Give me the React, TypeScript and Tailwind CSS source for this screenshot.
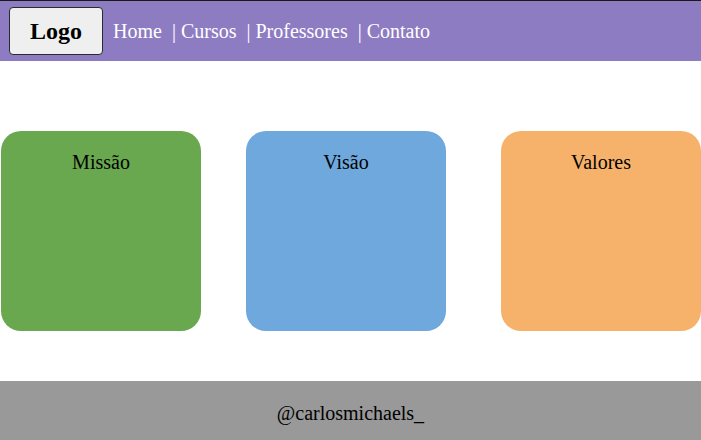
import React from 'react';

const links = ['Home', 'Cursos', 'Professores', 'Contato'];

const cards = [
  { title: 'Missão', color: 'bg-[#6aa84f]', gap: 'ml-[1px]' },
  { title: 'Visão', color: 'bg-[#6fa8dc]', gap: 'ml-[45px]' },
  { title: 'Valores', color: 'bg-[#f6b26b]', gap: 'ml-[55px]' },
];

const App: React.FC = () => {
  return (
    <div className="min-h-screen bg-white font-['Liberation_Serif',serif] text-black">
      <header className="flex h-[61px] items-center border-t border-[#1a1a1a] bg-[#8e7cc3] pl-[9px]">
        <button className="flex h-[48px] w-[94px] items-center justify-center rounded-[4px] border border-[#2b2b2b] bg-[#efefef] text-[24px] font-bold">
          Logo
        </button>
        <nav className="ml-[10px] flex items-center text-[20px] text-white">
          {links.map((link, idx) => (
            <a key={link} href="#" className={idx === 0 ? '' : 'ml-[10px]'}>
              {idx === 0 ? link : `| ${link}`}
            </a>
          ))}
        </nav>
      </header>

      <main className="flex pt-[70px] pb-[50px]">
        {cards.map((card) => (
          <div
            key={card.title}
            className={`${card.color} ${card.gap} h-[200px] w-[200px] shrink-0 rounded-[20px] pt-[16px] text-center text-[20px]`}
          >
            {card.title}
          </div>
        ))}
      </main>

      <footer className="bg-[#999999] pt-[17px] pb-5 text-center text-[20px]">@carlosmichaels_</footer>
    </div>
  );
};

export default App;
